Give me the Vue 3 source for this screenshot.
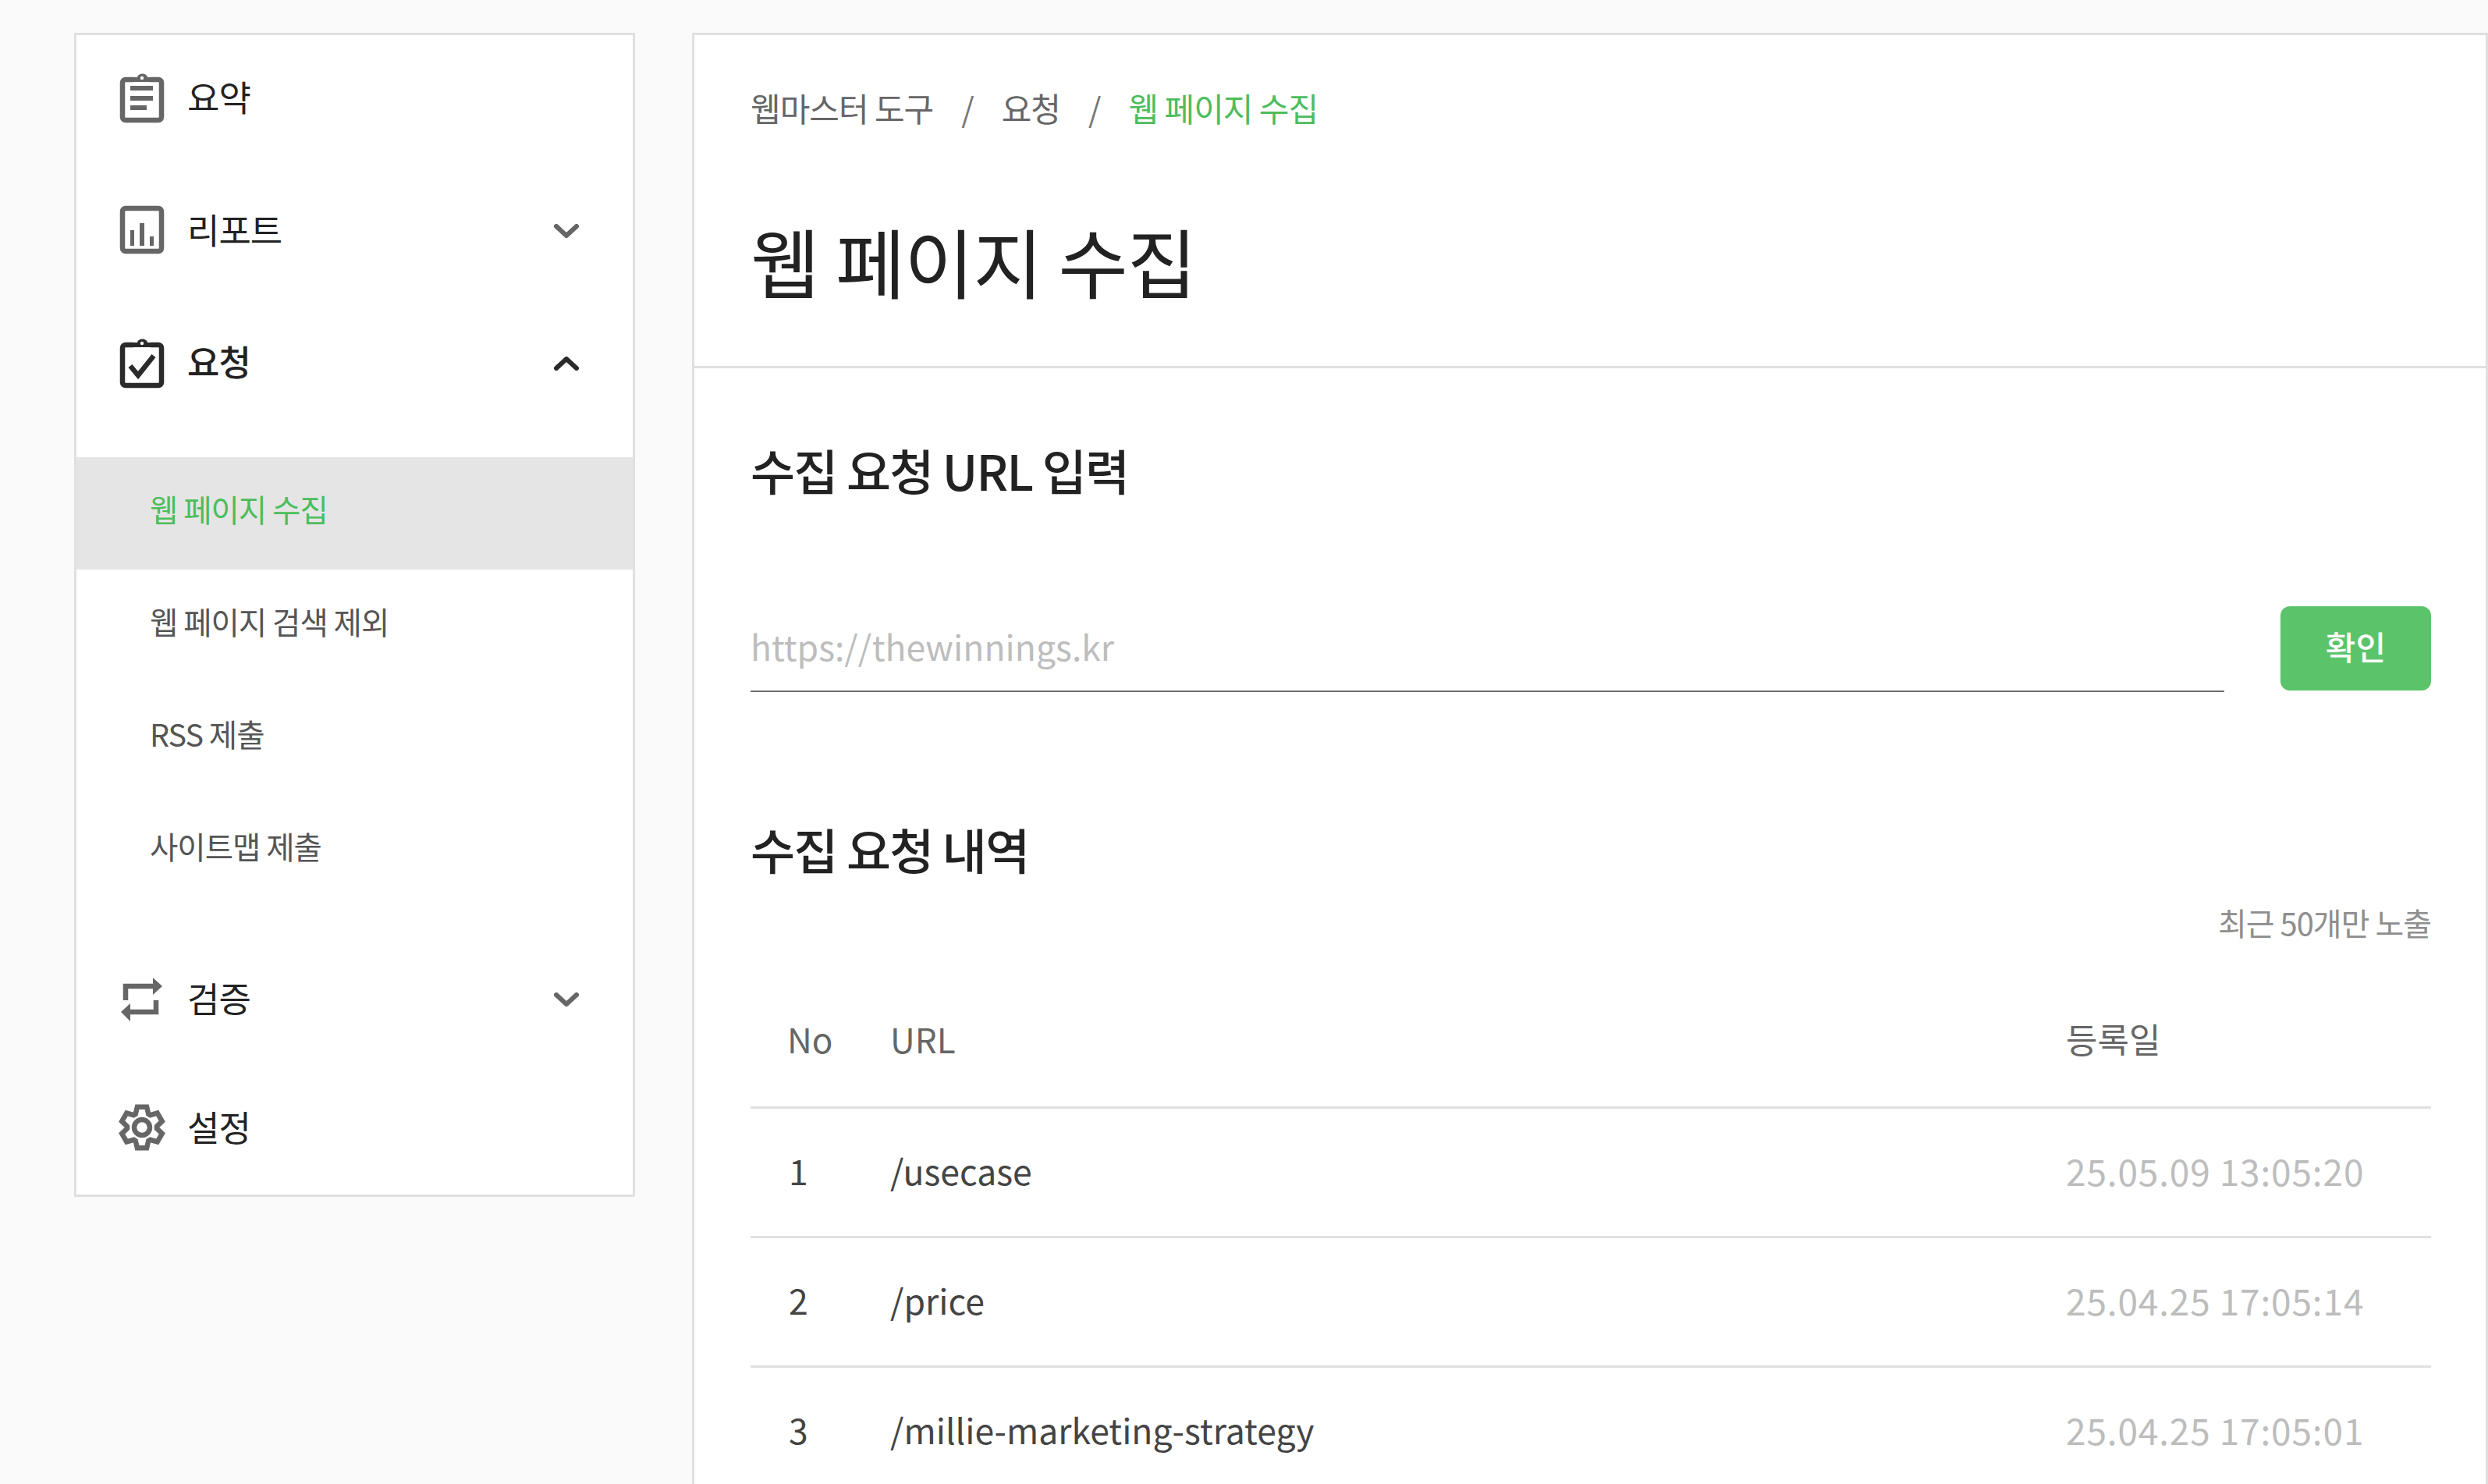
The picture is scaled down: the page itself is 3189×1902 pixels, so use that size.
<script setup>
const subItems = [
  { label: '웹 페이지 수집', active: true },
  { label: '웹 페이지 검색 제외' },
  { label: 'RSS 제출' },
  { label: '사이트맵 제출' }
]

const rows = [
  { no: 1, url: '/usecase', date: '25.05.09 13:05:20' },
  { no: 2, url: '/price', date: '25.04.25 17:05:14' },
  { no: 3, url: '/millie-marketing-strategy', date: '25.04.25 17:05:01' }
]

// gear outline, six teeth with the flat tops up and down
const gearPath = () => {
  const pts = []
  for (let i = 0; i < 6; i++) {
    const a = (-90 + i * 60) * Math.PI / 180
    const at = (r, d) => {
      const t = a + d * Math.PI / 180
      return `${(30 + r * Math.cos(t)).toFixed(1)} ${(35 + r * Math.sin(t)).toFixed(1)}`
    }
    pts.push(at(19, -26), at(27, -13), at(27, 13), at(19, 26))
  }
  return 'M' + pts.join('L') + 'Z'
}
</script>

<template>
  <div class="page">
    <aside class="sidebar">
      <a class="nav-row">
        <svg class="nav-icon" viewBox="0 0 60 70">
          <path class="line" d="M19 13H9a4 4 0 0 0-4 4v44a4 4 0 0 0 4 4h42a4 4 0 0 0 4-4V17a4 4 0 0 0-4-4H41" />
          <path class="fill" d="M19 10h5c1-6 12-6 13 0h5v6H19z" />
          <circle cx="30" cy="11" r="2.2" fill="#fff" />
          <path class="fill" d="M15 21h29v6H15zM15 34h29v6H15zM15 46h21v6H15z" />
        </svg>
        <span class="nav-label">요약</span>
      </a>
      <a class="nav-row">
        <svg class="nav-icon" viewBox="0 0 60 70">
          <rect class="line" x="5" y="8" width="50" height="55" rx="4" />
          <path class="fill" d="M15 36h5v20h-5zM27 27h6v29h-6zM40 44h5v12h-5z" />
        </svg>
        <span class="nav-label">리포트</span>
        <svg class="chevron" viewBox="0 0 32 18"><path d="M3 3l13 12L29 3" /></svg>
      </a>
      <a class="nav-row open">
        <svg class="nav-icon" viewBox="0 0 60 70">
          <path class="line" d="M19 13H9a4 4 0 0 0-4 4v44a4 4 0 0 0 4 4h42a4 4 0 0 0 4-4V17a4 4 0 0 0-4-4H41" />
          <path class="fill" d="M19 10h5c1-6 12-6 13 0h5v6H19z" />
          <circle cx="30" cy="11" r="2.2" fill="#fff" />
          <path class="line" d="M15 40l10 12 20-25" />
        </svg>
        <span class="nav-label">요청</span>
        <svg class="chevron" viewBox="0 0 32 18"><path d="M3 15L16 3l13 12" /></svg>
      </a>

      <ul class="sub-list">
        <li v-for="item in subItems" :key="item.label" class="sub-item" :class="{ active: item.active }">
          {{ item.label }}
        </li>
      </ul>

      <a class="nav-row">
        <svg class="nav-icon" viewBox="0 0 60 70">
          <path class="line" d="M9 38V20h36" />
          <path class="fill" d="M44 9l12 11-12 11z" />
          <path class="line" d="M48 38v15H14" />
          <path class="fill" d="M15 42L3 53l12 12z" />
        </svg>
        <span class="nav-label">검증</span>
        <svg class="chevron" viewBox="0 0 32 18"><path d="M3 3l13 12L29 3" /></svg>
      </a>
      <a class="nav-row last">
        <svg class="nav-icon" viewBox="0 0 60 70">
          <path class="line" :d="gearPath()" />
          <circle class="line" cx="30" cy="35" r="10" />
        </svg>
        <span class="nav-label">설정</span>
      </a>
    </aside>

    <main class="panel">
      <header class="panel-head">
        <nav class="crumbs">
          <span>웹마스터 도구</span>
          <i>/</i>
          <span>요청</span>
          <i>/</i>
          <span class="current">웹 페이지 수집</span>
        </nav>
        <h1>웹 페이지 수집</h1>
      </header>

      <section class="panel-body">
        <h2 class="first">수집 요청 URL 입력</h2>
        <form class="url-form" @submit.prevent>
          <input type="text" placeholder="https://thewinnings.kr" />
          <button type="submit">확인</button>
        </form>

        <h2 class="second">수집 요청 내역</h2>
        <p class="note">최근 50개만 노출</p>

        <table>
          <thead>
            <tr>
              <th class="col-no">No</th>
              <th>URL</th>
              <th class="col-date">등록일</th>
            </tr>
          </thead>
          <tbody>
            <tr v-for="row in rows" :key="row.no">
              <td class="col-no">{{ row.no }}</td>
              <td>{{ row.url }}</td>
              <td class="col-date date">{{ row.date }}</td>
            </tr>
          </tbody>
        </table>
      </section>
    </main>
  </div>
</template>

<style>
html, body {
  margin: 0;
  height: 100%;
  overflow: hidden;
  background: #fafafa;
}
</style>

<style scoped>
.page {
  display: flex;
  align-items: flex-start;
  gap: 73px;
  height: 1902px;
  box-sizing: border-box;
  padding: 42px 0 0 95px;
  overflow: hidden;
  font-family: "Noto Sans CJK KR", "Noto Sans", sans-serif;
  color: #222;
}

.sidebar {
  flex: 0 0 719px;
  box-sizing: border-box;
  background: #fff;
  border: 3px solid #e0e0e0;
}

.nav-row {
  display: flex;
  align-items: center;
  box-sizing: border-box;
  height: 170px;
  padding: 0 69px 14px 54px;
}

.nav-row.last {
  height: 161px;
}

.nav-icon {
  width: 60px;
  height: 70px;
  margin: 2px 28px 0 0;
}

.line {
  fill: none;
  stroke: #666;
  stroke-width: 6.5;
}

.fill {
  fill: #666;
}

.open .line {
  stroke: #2a2a2a;
}

.open .fill {
  fill: #2a2a2a;
}

.nav-label {
  flex: 1;
  font-size: 45px;
  letter-spacing: -1px;
}

.open .nav-label {
  font-weight: 500;
  margin-bottom: 2px;
}

.chevron {
  width: 32px;
  height: 18px;
  margin-top: 5px;
  fill: none;
  stroke: #666;
  stroke-width: 6;
  stroke-linecap: round;
  stroke-linejoin: round;
}

.open .chevron {
  stroke: #2a2a2a;
}

.sub-list {
  list-style: none;
  margin: 0;
  padding: 31px 0 38px;
}

.sub-item {
  box-sizing: border-box;
  height: 144px;
  line-height: 132px;
  padding-left: 94px;
  font-size: 39.5px;
  letter-spacing: -1px;
  color: #555;
}

.sub-item.active {
  background: #e5e5e5;
  color: #4dbd5c;
}

.panel {
  flex: 1;
  min-width: 0;
  height: 2000px;
  background: #fff;
  border: 3px solid #e0e0e0;
}

.panel-head {
  box-sizing: border-box;
  height: 427px;
  padding: 0 72px;
  border-bottom: 3px solid #e0e0e0;
}

.crumbs {
  display: flex;
  align-items: center;
  height: 184px;
  box-sizing: border-box;
  font-size: 42px;
  letter-spacing: -1px;
  color: #666;
}

.crumbs i {
  margin: 0 36px;
  font-style: normal;
  color: #777;
}

.crumbs .current {
  color: #4dbd5c;
}

h1 {
  margin: -6px 0 0;
  font-size: 97px;
  font-weight: 400;
  line-height: 220px;
  letter-spacing: -1px;
  color: #222;
}

.panel-body {
  padding: 0 70px 0 72px;
}

h2 {
  margin: 0;
  font-size: 62px;
  font-weight: 500;
  line-height: 80px;
  letter-spacing: -1.7px;
  color: #222;
}

h2.first {
  padding-top: 90px;
}

.url-form {
  display: flex;
  align-items: flex-end;
  gap: 72px;
  margin-top: 135px;
}

.url-form input {
  flex: 1;
  min-width: 0;
  height: 110px;
  box-sizing: border-box;
  padding: 0 0 8px;
  border: 0;
  border-bottom: 2px solid #6f6f6f;
  outline: none;
  background: none;
  font: inherit;
  font-size: 44.5px;
}

.url-form input::placeholder {
  color: #bdbdbd;
}

.url-form button {
  flex: 0 0 193px;
  height: 108px;
  margin-bottom: 2px;
  padding: 0 0 8px;
  border: 0;
  border-radius: 12px;
  background: #5bc46a;
  color: #fff;
  font: inherit;
  font-size: 42px;
  font-weight: 500;
}

h2.second {
  margin-top: 161px;
}

.note {
  margin: 24px 0 0;
  line-height: 60px;
  text-align: right;
  font-size: 40px;
  letter-spacing: -1px;
  color: #8e8e8e;
}

table {
  width: 100%;
  margin-top: 32px;
  border-collapse: collapse;
  table-layout: fixed;
}

th {
  height: 174px;
  padding: 0;
  text-align: left;
  font-size: 44px;
  font-weight: 400;
  color: #666;
  border-bottom: 3px solid #e0e0e0;
}

th.col-no {
  padding-left: 47px;
}

td {
  height: 166px;
  padding: 0 0 6px;
  box-sizing: border-box;
  font-size: 44.5px;
  color: #444;
  border-bottom: 3px solid #e0e0e0;
}

.col-no {
  width: 179px;
  padding-left: 49px;
  box-sizing: border-box;
}

.col-date {
  width: 468px;
}

.date {
  font-size: 46px;
  letter-spacing: 0.85px;
  color: #bdbdbd;
}
</style>
